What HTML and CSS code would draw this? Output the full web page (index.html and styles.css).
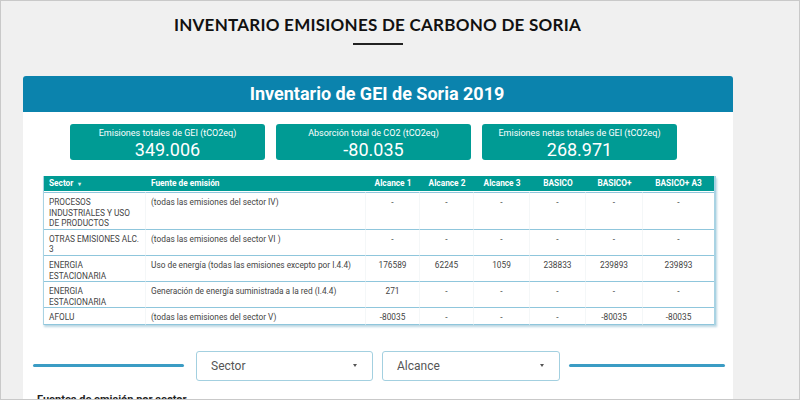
FILE: index.html
```html
<!DOCTYPE html>
<html lang="es">
<head>
    <meta charset="UTF-8">
    <meta name="viewport" content="width=device-width, initial-scale=1.0">
    <title>Inventario emisiones de carbono de Soria</title>
    <link rel="stylesheet" href="styles.css">
</head>
<body>
    <!-- Page title -->
    <h1 class="page-title">INVENTARIO EMISIONES DE CARBONO DE SORIA</h1>
    <div class="title-rule"></div>

    <!-- Report panel -->
    <div class="panel">
        <div class="panel-header">Inventario de GEI de Soria 2019</div>

        <!-- Summary cards -->
        <div class="cards">
            <div class="card">
                <div class="card-label">Emisiones totales de GEI (tCO2eq)</div>
                <div class="card-value">349.006</div>
            </div>
            <div class="card">
                <div class="card-label">Absorción total de CO2 (tCO2eq)</div>
                <div class="card-value">-80.035</div>
            </div>
            <div class="card">
                <div class="card-label">Emisiones netas totales de GEI (tCO2eq)</div>
                <div class="card-value">268.971</div>
            </div>
        </div>

        <!-- Emissions table -->
        <table class="gei-table">
            <colgroup>
                <col style="width:102px">
                <col style="width:220px">
                <col style="width:54px">
                <col style="width:54px">
                <col style="width:56px">
                <col style="width:56px">
                <col style="width:57px">
                <col style="width:71px">
            </colgroup>
            <thead>
                <tr>
                    <th class="left">Sector <span class="sort">&#9662;</span></th>
                    <th class="left">Fuente de emisión</th>
                    <th>Alcance 1</th>
                    <th>Alcance 2</th>
                    <th>Alcance 3</th>
                    <th>BASICO</th>
                    <th>BASICO+</th>
                    <th>BASICO+ A3</th>
                </tr>
            </thead>
            <tbody>
                <tr>
                    <td class="left">PROCESOS INDUSTRIALES Y USO DE PRODUCTOS</td>
                    <td class="left">(todas las emisiones del sector IV)</td>
                    <td>-</td><td>-</td><td>-</td><td>-</td><td>-</td><td>-</td>
                </tr>
                <tr>
                    <td class="left">OTRAS EMISIONES ALC. 3</td>
                    <td class="left">(todas las emisiones del sector VI )</td>
                    <td>-</td><td>-</td><td>-</td><td>-</td><td>-</td><td>-</td>
                </tr>
                <tr>
                    <td class="left">ENERGIA ESTACIONARIA</td>
                    <td class="left">Uso de energía (todas las emisiones excepto por I.4.4)</td>
                    <td>176589</td><td>62245</td><td>1059</td><td>238833</td><td>239893</td><td>239893</td>
                </tr>
                <tr>
                    <td class="left">ENERGIA ESTACIONARIA</td>
                    <td class="left">Generación de energía suministrada a la red (I.4.4)</td>
                    <td>271</td><td>-</td><td>-</td><td>-</td><td>-</td><td>-</td>
                </tr>
                <tr>
                    <td class="left">AFOLU</td>
                    <td class="left">(todas las emisiones del sector V)</td>
                    <td>-80035</td><td>-</td><td>-</td><td>-</td><td>-80035</td><td>-80035</td>
                </tr>
            </tbody>
        </table>

        <!-- Filters -->
        <div class="filters">
            <div class="filter-line"></div>
            <div class="select">
                <span>Sector</span>
                <span class="caret"></span>
            </div>
            <div class="select">
                <span>Alcance</span>
                <span class="caret"></span>
            </div>
            <div class="filter-line right"></div>
        </div>

        <h2 class="section-title">Fuentes de emisión por sector</h2>
    </div>
</body>
</html>
```

FILE: styles.css
```css
/* General Reset */
* {
    margin: 0;
    padding: 0;
    box-sizing: border-box;
}
body {
    font-family: Roboto, "Liberation Sans", Arial, sans-serif;
    background-color: #f0f0f0;
    border: 1px solid #c9c9c9;
    height: 400px;
    overflow: hidden;
    color: #333;
}
/* Title */
.page-title {
    font-family: Lato, "DejaVu Sans", sans-serif;
    font-weight: 700;
    font-size: 17px;
    letter-spacing: 0.25px;
    line-height: 22px;
    padding-top: 13px;
    padding-right: 45px;
    text-align: center;
    color: #111;
}
.title-rule {
    width: 50px;
    height: 2px;
    background-color: #222;
    margin: 7px 0 0 352px;
}
/* Panel */
.panel {
    width: 710px;
    margin: 31px 0 0 22px;
    background-color: #fff;
    border-radius: 3px 3px 0 0;
    height: 330px;
}
.panel-header {
    height: 36px;
    line-height: 35px;
    background-color: #0b83ad;
    border-radius: 3px 3px 0 0;
    color: #fff;
    font-size: 18px;
    font-weight: 700;
    text-align: center;
    padding-right: 2px;
}
/* Cards */
.cards {
    display: flex;
    gap: 11px;
    margin: 12px 0 0 47px;
}
.card {
    width: 195px;
    height: 36px;
    background-color: #009b94;
    border-radius: 3px;
    color: #fff;
    text-align: center;
    padding-top: 4px;
}
.card-label {
    font-size: 9px;
    line-height: 11px;
}
.card-value {
    font-size: 18px;
    line-height: 21px;
}
/* Table */
.gei-table {
    width: 670px;
    margin: 16px 0 0 20px;
    border-collapse: separate;
    border-spacing: 0;
    table-layout: fixed;
    font-size: 8.3px;
    border-left: 1px solid #a9d3e3;
    border-right: 2px solid #a9d3e3;
    box-shadow: 1px 2px 2px rgba(60, 140, 175, 0.35);
}
.gei-table th {
    background-color: #009b94;
    color: #fff;
    font-weight: 700;
    height: 15px;
    line-height: 15px;
    text-align: center;
    border-bottom: 1px solid #fff;
    padding: 0 5px;
}
.gei-table .sort {
    font-size: 6px;
    margin-left: 3px;
    color: #d8f0ee;
}
.gei-table td {
    text-align: center;
    vertical-align: top;
    color: #444;
    line-height: 10.6px;
    padding: 4px 5px 0;
    border-top: 1px solid #8fc6dc;
    border-right: 1px solid #f4f7f8;
}
.gei-table td:last-child {
    border-right: none;
}
.gei-table tr:last-child td {
    border-bottom: 1px solid #8fc6dc;
    padding-bottom: 1px;
}
.gei-table .left {
    text-align: left;
}
/* Filters */
.filters {
    display: flex;
    align-items: center;
    margin: 26px 0 0 10px;
}
.filter-line {
    width: 151px;
    height: 3px;
    border-radius: 2px;
    background-color: #3b9cc4;
    margin-right: 12px;
}
.filter-line.right {
    width: 156px;
    margin: 0 0 0 9px;
}
.select {
    width: 177px;
    height: 30px;
    border: 1px solid #a3d0e0;
    border-radius: 3px;
    display: flex;
    align-items: center;
    justify-content: space-between;
    padding: 0 15px 0 14px;
    font-size: 12px;
    color: #555;
}
.select + .select {
    margin-left: 9px;
    width: 178px;
}
.caret {
    width: 0;
    height: 0;
    border-left: 2.5px solid transparent;
    border-right: 2.5px solid transparent;
    border-top: 3px solid #555;
}
.section-title {
    font-size: 11px;
    font-weight: 700;
    color: #222;
    margin: 12px 0 0 14px;
}
```
